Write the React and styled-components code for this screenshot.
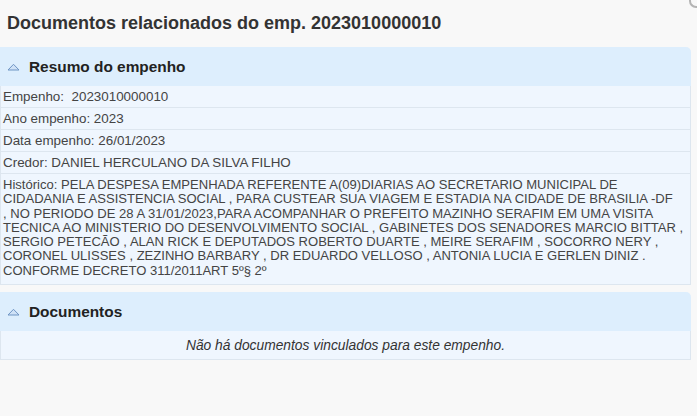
import React from "react";
import styled, { createGlobalStyle } from "styled-components";

const Global = createGlobalStyle`
  html, body { margin: 0; padding: 0; background: #f8f8f8; }
  body { font-family: "Liberation Sans", Arial, sans-serif; }
`;

const Page = styled.div`
  width: 697px;
  height: 416px;
  background: #f8f8f8;
  position: relative;
  overflow: hidden;
`;

const Title = styled.h2`
  margin: 0;
  padding: 13px 7px 0;
  height: 35px;
  box-sizing: border-box;
  font-size: 18px;
  font-weight: bold;
  color: #333;
`;

const Corner = styled.div`
  position: absolute;
  right: -6px;
  top: -6px;
  width: 12px;
  height: 12px;
  border-left: 2px solid #888;
  border-bottom: 2px solid #888;
  border-radius: 50%;
  opacity: 0.6;
`;

const Panel = styled.section`
  width: 691px;
  margin-top: ${p => p.$top}px;
`;

const Header = styled.div`
  display: flex;
  align-items: center;
  gap: 9px;
  height: 39px;
  padding-left: 7px;
  background: #ddeefd;
  border-radius: 0 5px 0 0;
  font-size: 15.4px;
  font-weight: bold;
  color: #222;
`;

const Row = styled.div`
  background: #eff6fe;
  border: 1px solid #dde6ef;
  border-top: none;
  padding: ${p => (p.$multi ? "4px 2px 6px" : "1px 2px 0")};
  min-height: ${p => (p.$multi ? "auto" : "20px")};
  display: ${p => (p.$multi ? "block" : "flex")};
  align-items: center;
  justify-content: ${p => (p.$center ? "center" : "flex-start")};
  font-size: ${p => (p.$multi ? "13.05px" : "13.4px")};
  line-height: ${p => (p.$multi ? "14.3px" : "20px")};
  color: #444;
  white-space: ${p => (p.$multi ? "nowrap" : "normal")};
  ${p => p.$center && "font-style: italic; font-size: 13.8px; color: #333; height: 27px;"}
`;

const Line = styled.div``;

const Arrow = () => (
  <svg width="13" height="8" viewBox="0 0 13 8">
    <path d="M1 7 L6.5 1.3 L12 7 Z" fill="#cfe2f7" stroke="#6f95c4" strokeWidth="1" strokeLinejoin="round" />
  </svg>
);

const historico = [
  "Histórico: PELA DESPESA EMPENHADA REFERENTE A(09)DIARIAS AO SECRETARIO MUNICIPAL DE",
  "CIDADANIA E ASSISTENCIA SOCIAL , PARA CUSTEAR SUA VIAGEM E ESTADIA NA CIDADE DE BRASILIA -DF",
  ", NO PERIODO DE 28 A 31/01/2023,PARA ACOMPANHAR O PREFEITO MAZINHO SERAFIM EM UMA VISITA",
  "TECNICA AO MINISTERIO DO DESENVOLVIMENTO SOCIAL , GABINETES DOS SENADORES MARCIO BITTAR ,",
  "SERGIO PETECÃO , ALAN RICK E DEPUTADOS ROBERTO DUARTE , MEIRE SERAFIM , SOCORRO NERY ,",
  "CORONEL ULISSES , ZEZINHO BARBARY , DR EDUARDO VELLOSO , ANTONIA LUCIA E GERLEN DINIZ .",
  "CONFORME DECRETO 311/2011ART 5º§ 2º",
];

export default function App() {
  return (
    <Page>
      <Global />
      <Corner />
      <Title>Documentos relacionados do emp. 2023010000010</Title>
      <Panel $top={12}>
        <Header>
          <Arrow />
          Resumo do empenho
        </Header>
        <Row>Empenho:&nbsp; 2023010000010</Row>
        <Row>Ano empenho: 2023</Row>
        <Row>Data empenho: 26/01/2023</Row>
        <Row>Credor: DANIEL HERCULANO DA SILVA FILHO</Row>
        <Row $multi>
          {historico.map((l, i) => (
            <Line key={i}>{l}</Line>
          ))}
        </Row>
      </Panel>
      <Panel $top={7}>
        <Header>
          <Arrow />
          Documentos
        </Header>
        <Row $center>Não há documentos vinculados para este empenho.</Row>
      </Panel>
    </Page>
  );
}
